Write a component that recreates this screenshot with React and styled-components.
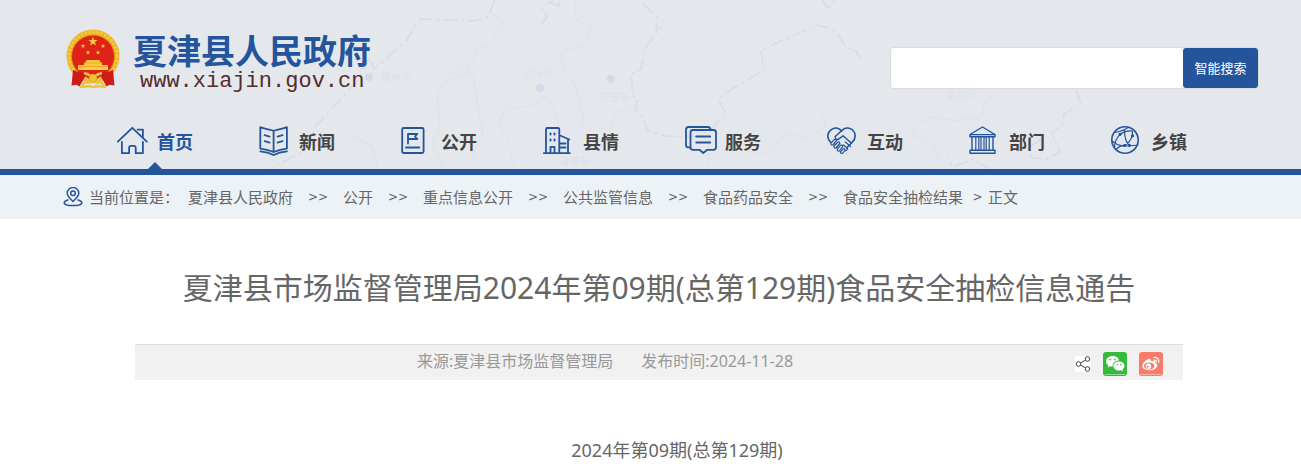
import React from 'react';
import styled, { createGlobalStyle } from 'styled-components';

const GlobalStyle = createGlobalStyle`
    * {
        box-sizing: border-box;
    }
    body {
        margin: 0;
        background-color: #fff;
        color: #666;
        font-family: 'Noto Sans', 'Noto Sans CJK SC', sans-serif;
    }
    a {
        color: inherit;
        text-decoration: none;
    }
`;

const Page = styled.div`
    padding-left: 17px;
`;

const Container = styled.div`
    max-width: 1200px;
    margin: 0 auto;
`;

const Header = styled.header`
    position: relative;
    margin-left: -17px;
    padding-left: 17px;
    background-color: #e4e8ed;
    border-bottom: 6px solid #24549b;
    overflow: hidden;
`;

const Backdrop = styled.svg`
    position: absolute;
    top: 0;
    left: 50%;
    margin-left: -650px;
    width: 1301px;
    height: 169px;
`;

const HeaderInner = styled(Container)`
    position: relative;
`;

const TopRow = styled.div`
    display: flex;
    justify-content: space-between;
    align-items: flex-start;
    height: 113px;
    padding: 29px 0 0 7px;
`;

const Brand = styled.a`
    display: flex;
    gap: 13px;
`;

const BrandText = styled.div`
    padding-top: 2px;
`;

const SiteName = styled.div`
    font-size: 34px;
    line-height: 40px;
    font-weight: 700;
    color: #24549b;
`;

const SiteUrl = styled.div`
    padding-left: 7px;
    font-family: 'Liberation Mono', monospace;
    font-size: 22px;
    line-height: 22px;
    color: #552c2c;
`;

const SearchForm = styled.form`
    display: flex;
    margin-top: 18px;
    border: 1px solid #dcdcdc;
    border-radius: 3px;
    background-color: #fff;
`;

const SearchInput = styled.input`
    width: 292px;
    height: 40px;
    padding: 0 10px;
    border: 0;
    outline: none;
    background: transparent;
    font-size: 14px;
`;

const SearchButton = styled.button`
    width: 75px;
    height: 40px;
    padding: 0 0 2px;
    border: 0;
    border-radius: 3px;
    background-color: #24549b;
    color: #fff;
    font-family: inherit;
    font-size: 13px;
    cursor: pointer;
`;

const Nav = styled.nav`
    display: flex;
    padding: 0 39px 0 25px;
`;

const NavLink = styled.a`
    position: relative;
    display: flex;
    flex: 1;
    justify-content: center;
    align-items: center;
    gap: 8px;
    height: 56px;
    font-size: 18px;
    font-weight: 700;
    color: ${({ $active }) => $active ? '#24549b' : '#444'};

    &::after {
        content: '';
        display: ${({ $active }) => $active ? 'block' : 'none'};
        position: absolute;
        bottom: 0;
        left: 50%;
        margin-left: -7px;
        border: 7px solid transparent;
        border-top: 0;
        border-bottom-color: #24549b;
    }
`;

const NavIcon = styled.svg`
    width: 32px;
    height: 30px;
    fill: none;
    stroke: #24549b;
    stroke-width: 1.8;
    stroke-linejoin: round;
    stroke-linecap: round;
`;

const CrumbBar = styled.div`
    margin-left: -17px;
    padding-left: 17px;
    background-color: #edf2f7;
`;

const Crumbs = styled(Container)`
    display: flex;
    align-items: center;
    height: 44px;
    padding: 0 0 1px 4px;
    font-size: 15px;
    white-space: nowrap;
`;

const PinIcon = styled.svg`
    width: 20px;
    height: 20px;
    margin-right: 6px;
    fill: none;
    stroke: #24549b;
    stroke-width: 1.5;
`;

const CrumbLabel = styled.span`
    margin-right: 9px;
`;

const Separator = styled.span`
    width: ${({ $last }) => $last ? '25px' : '50px'};
    padding-left: ${({ $last }) => $last ? '4px' : '0'};
    font-family: 'DejaVu Sans', sans-serif;
    font-size: 12px;
    text-align: center;
`;

const Article = styled(Container)`
    padding: 49px 76px 0;
`;

const Title = styled.h1`
    margin: 0;
    font-size: 30px;
    line-height: 40px;
    font-weight: 400;
    text-align: center;
`;

const Meta = styled.div`
    display: flex;
    height: 36px;
    margin-top: 36px;
    padding-right: 20px;
    background-color: #f1f1f1;
    border-top: 1px solid #ddd;
    color: #999;
`;

const MetaText = styled.div`
    display: flex;
    flex: 1;
    justify-content: center;
    gap: 28px;
    font-size: 16px;
    line-height: 32px;
`;

const Share = styled.div`
    display: flex;
    align-items: center;
    gap: 12px;
    padding-top: 3px;
`;

const ShareIcon = styled.svg`
    width: 16px;
    height: 16px;
    background-color: #fff;
    fill: none;
    stroke: #444;
    stroke-width: 1;
`;

const ShareButton = styled.button`
    width: 24px;
    height: 24px;
    padding: 0;
    border: 0;
    border-radius: 3px;
    background-color: ${({ $color }) => $color};
    cursor: pointer;

    svg {
        display: block;
    }
`;

const Content = styled.p`
    margin: 56px 0 0;
    font-size: 18px;
    line-height: 28px;
    text-align: center;
    text-indent: 2em;
`;

const navItems = [
    {
        name: '首页',
        icon: <>
            <path d="M.8 15.6 15.3 1.8l14.5 13.8" />
            <path d="M4.9 16v11.2h7.2v-5.4q0-2 2-2h2.6q2 0 2 2v5.4h7.2V16" />
            <path d="M20.5 3.6h5.4v7" />
        </>
    },
    {
        name: '新闻',
        icon: <>
            <path d="M14.6 4.8C10.5 3.6 6.5 3.2 1.3 1.2v21.4c5 .6 9.3 1.8 13.3 3.4 4-1.6 8.3-2.8 13.3-3.4V1.2c-5.2 2-9.2 2.4-13.3 3.6zV26" />
            <path d="M5.6 9.2l5 1.4M5.6 15.2l5 1.4M23.6 9.2l-5 1.4M23.6 15.2l-5 1.4M1.2 25.3q8 .8 13.4 3.7 5.4-2.9 13.4-3.7" />
        </>
    },
    {
        name: '公开',
        icon: <>
            <rect x="1.2" y="2" width="21.4" height="25" rx="1.5" />
            <path d="M7 17.5V8h9.3L14 10.5l2.3 2.5H7M5 21.5h13.3" />
        </>
    },
    {
        name: '县情',
        icon: <>
            <path d="M.8 27.2h26M3 27V3.2Q3 2 4.2 2H15q1.3 0 1.3 1.3V27M7.5 27v-6.2h4V27M16.5 9.2l9.8 4.3M25 13.5V27M17 17.5h5.5M17 21.5h5.5" />
            <path d="M7.5 7.5v1M11.5 7.5v1M7.5 13.5v1M11.5 13.5v1" strokeWidth="2" />
        </>
    },
    {
        name: '服务',
        icon: <>
            <path d="M5 21.4H3.5Q1 21.4 1 19V3.6Q1 1 3.5 1h19.3q2.2 0 2.8 2.4" />
            <path d="M8 4h20.5Q31 4 31 6.5v14.8q0 2.5-2.5 2.5h-6.3L18.3 27l-3.9-3.2H8q-2.5 0-2.5-2.5V6.5Q5.5 4 8 4zM11.2 10.5h14M11.2 16.5h14" />
        </>
    },
    {
        name: '互动',
        icon: <>
            <path d="M3.8 16.5C.8 13.5 0 9.500 2 6 4.500 1.800 9.300.9 12.500 3.200l2 1.600 2-1.600C19.700.9 25 1.800 27.200 6c1.800 3.700 1 7.200-2 10.300L20 21.500" strokeWidth="1.600" />
            <path d="M14.500 4.800 8.300 10.500c-.8 2.500 1.500 3.700 3.500 2.500l4.200-3.200 8.300 7.200" strokeWidth="1.500" />
            <path d="m4 17 3.300-3.300q2-1 2.200 1L5.800 19q-2.500.2-1.800-2zM7 20l4-4q2-.5 1.800 1.500L9 22q-2.500.3-2-2zM10.300 23l3.500-3.800q2-.5 1.800 1.500L12.300 25q-2.500.3-2-2zM13.300 26l3-3.300q2-.3 1.700 1.600L15.500 27.300q-2 .5-2.200-1.300M18 24.500q2 .6 2.200-1.700M16.500 19l4.200 3.800M18.300 16l5.200 4.500" strokeWidth="1.200" />
        </>
    },
    {
        name: '部门',
        icon: <>
            <path d="M1 8.5 13.5 1 26 8.5v2.3H1zM1 8.6h25M1 27.2v-3h25v3zM3 11v13M24 11v13" strokeWidth="1.4" />
            <path d="M6.8 11v13M9.8 11v13M12 11v13M15 11v13M17.2 11v13M20.2 11v13" strokeWidth="1.2" />
        </>
    },
    {
        name: '乡镇',
        icon: <>
            <circle cx="14" cy="14" r="13.2" strokeWidth="1.6" />
            <path d="M3.5 6.500Q12 5 17 1.400M9 8.300Q3 15 3.500 21.500M9 8.300Q15 4 21.500 5M1 15q6 5 12.500 5T27 19M18.500 19.500q-5-4-5-15.500M14.500 19Q22 14 21.500 5M5 23.300q4-4 8.700-4" strokeWidth="1.200" />
            <path d="M9 8.300h.1M21.500 9.800h.1M13.500 19.500h.1M18.300 19.300h.1" strokeWidth="3.200" />
        </>
    }
];

const crumbs = ['夏津县人民政府', '公开', '重点信息公开', '公共监管信息', '食品药品安全', '食品安全抽检结果'];

const star = 'M0-1 .23-.31H.95L.36.12.59.81 0 .38-.59.81-.36.12-.95-.31H-.23z';

const Emblem = () => (
    <svg width="54" height="59" viewBox="0 0 54 59" aria-hidden="true">
        <circle cx="27" cy="27" r="26.5" fill="#efb526" />
        <circle cx="27" cy="27" r="24" fill="none" stroke="#f5cb45" strokeWidth="3" strokeDasharray="2 2" />
        <circle cx="27" cy="27.500" r="21.500" fill="#df2319" stroke="#d99a1c" strokeWidth=".8" />
        <path d={star} transform="translate(27 12.500) scale(5)" fill="#f8cf3a" />
        <path d={star} transform="translate(17 17) scale(2.500)" fill="#f8cf3a" />
        <path d={star} transform="translate(37 17) scale(2.500)" fill="#f8cf3a" />
        <path d={star} transform="translate(22 23.500) scale(2.500)" fill="#f8cf3a" />
        <path d={star} transform="translate(32 23.500) scale(2.500)" fill="#f8cf3a" />
        <path d="M18 34q2-.5 2.500-3h13q.5 2.500 2.500 3v2h6v5H12v-5h6z" fill="#f6cb42" />
        <path d="M19 34h16M12 37.500h30" stroke="#e9a02a" strokeWidth=".8" />
        <path d="M7 41q6 3 13 2.500l7 2 7-2q7 .5 13-2.500l1.500 15.500-5-.8-3 1.800-4.500-8H18l-4.500 8-3-1.800-5 .8z" fill="#cd1c18" />
        <path d="M18 44q5 1 9 5 4-4 9-5M15 58l4-5q4 2 8-1 4 3 8 1l4 5-8-1-4 1.500-4-1.500zM19 48q4 5 8 5t8-5" fill="none" stroke="#f1c33a" strokeWidth="2.500" strokeLinejoin="round" />
        <circle cx="27" cy="49" r="4" fill="#f1c33a" stroke="#d9822a" strokeWidth=".6" />
    </svg>
);

// faint province map behind the header
const MapBackdrop = () => (
    <Backdrop viewBox="0 0 1301 169" fill="none" aria-hidden="true">
        <g stroke="#d7dce6" strokeWidth="1.500" strokeDasharray="14 4 3 4" strokeLinejoin="round">
            <path d="M494 0l-8 18-13 3-53-2-5 6-10 16-32 28-4-10-8 6M369 58l-14 24-16 18-24 26-10 23-35 20" />
            <path d="M642 4l14 13-1 13 5-3-15 20-5 22-10 5 2 22 5 3-3 10 9 10 3 11 18 6 32 1 15-8 14-16-8-14 12-9 34-20-3-20 20-9 36-16 16 4 14 19 8 1 5 9" />
            <path d="M1075 90l5 14-17 10-1 10-11 9 8 19-13 7-15-1-5-10 14-8-9-11M988 169l-16-10-20 8-6-10" />
            <path d="M540 25l6-8-5-10 11-6M550 3l8 3 1-7M822 0l4 8 5-2 3-6" />
        </g>
        <g stroke="#dee2e8" strokeWidth="1" strokeLinejoin="round">
            <path d="M488 10l13 12-12 22-13 4-11 27-20 6-9 15 3 30-7 18 10 24" />
            <path d="M448 74l14-8 10 10 6 35 4 22-11 24 9 10M340 154l14-17 17 9 5 21" />
            <path d="M574 0l1 20 15 6-4 17-27 10 5 22 10 9 9 37-6 12M497 122l8-14 25-2 16-10 12 28-5 20M497 122l8 14 8 30M640 101l-26 13-8 23-8 12" />
            <path d="M708 129v40M740 150l27 4 17-20 24 4 17-12-4-12M995 90l-12 17-3 13-14-3-9 4-26-4-17 10-2 9 22 10 4 16" />
        </g>
        <g fill="#d5dae8">
            <circle cx="368" cy="77" r="4" />
            <circle cx="539" cy="88" r="4" />
            <circle cx="610" cy="79" r="4" />
        </g>
        <g fill="#dde1e8" fontSize="10">
            <text x="380" y="81">德州市</text>
            <text x="522" y="78">滨州市</text>
            <text x="598" y="101">东营市</text>
            <text x="558" y="165">淄博市</text>
            <text x="945" y="98">烟台市</text>
        </g>
    </Backdrop>
);

const App = () => {
    return (
        <>
            <GlobalStyle />
            <Page>
                <Header>
                    <MapBackdrop />
                    <HeaderInner>
                        <TopRow>
                            <Brand href="#">
                                <Emblem />
                                <BrandText>
                                    <SiteName>夏津县人民政府</SiteName>
                                    <SiteUrl>www.xiajin.gov.cn</SiteUrl>
                                </BrandText>
                            </Brand>
                            <SearchForm onSubmit={(e) => e.preventDefault()}>
                                <SearchInput type="text" aria-label="智能搜索" />
                                <SearchButton type="submit">智能搜索</SearchButton>
                            </SearchForm>
                        </TopRow>
                        <Nav>
                            {navItems.map(({ name, icon }, i) => (
                                <NavLink href="#" key={name} $active={i === 0}>
                                    <NavIcon viewBox="0 0 32 30" aria-hidden="true">{icon}</NavIcon>
                                    {name}
                                </NavLink>
                            ))}
                        </Nav>
                    </HeaderInner>
                </Header>
                <CrumbBar>
                    <Crumbs>
                        <PinIcon viewBox="0 0 20 20" aria-hidden="true">
                            <path d="M10 14.5C6.5 11 4.2 9 4.2 6.2a5.8 5.6 0 0 1 11.6 0C15.8 9 13.5 11 10 14.5z" />
                            <circle cx="10" cy="6.3" r="2.3" />
                            <path d="M5.5 12.8C-1 14.5-.5 18.6 10 18.6s11-4.1 4.5-5.8" />
                        </PinIcon>
                        <CrumbLabel>当前位置是：</CrumbLabel>
                        {crumbs.map((name, i) => (
                            <React.Fragment key={name}>
                                <a href="#">{name}</a>
                                {i < crumbs.length - 1
                                    ? <Separator>&gt;&gt;</Separator>
                                    : <Separator $last>&gt;</Separator>}
                            </React.Fragment>
                        ))}
                        <span>正文</span>
                    </Crumbs>
                </CrumbBar>
                <Article as="main">
                    <Title>夏津县市场监督管理局2024年第09期(总第129期)食品安全抽检信息通告</Title>
                    <Meta>
                        <MetaText>
                            <span>来源:夏津县市场监督管理局</span>
                            <span>发布时间:2024-11-28</span>
                        </MetaText>
                        <Share>
                            <ShareIcon viewBox="0 0 16 16" aria-hidden="true">
                                <circle cx="3.5" cy="8" r="2.3" />
                                <circle cx="12.5" cy="3" r="2.3" />
                                <circle cx="12.5" cy="13" r="2.3" />
                                <path d="M5.5 6.9l5-2.8M5.5 9.1l5 2.8" />
                            </ShareIcon>
                            <ShareButton type="button" aria-label="微信" $color="#35bb3b">
                                <svg width="24" height="24" viewBox="0 0 24 24" fill="#fff">
                                    <path d="M9.6 4C5.9 4 3 6.3 3 9.3c0 1.7.9 3.1 2.4 4.1l-.7 2.1 2.5-1.3c.8.2 1.6.3 2.5.3-.5-3.6 2.6-6 6.5-5.9C15.6 6 12.9 4 9.6 4z" />
                                    <path d="M16 9.5c-3.3 0-5.6 2-5.6 4.5s2.5 4.6 5.6 4.6c.7 0 1.3-.1 1.9-.3l2 1.1-.5-1.8c1.2-.8 2.1-2.1 2.1-3.6 0-2.5-2.5-4.5-5.5-4.5z" />
                                    <g fill="#35bb3b">
                                        <circle cx="7.3" cy="7.6" r=".9" />
                                        <circle cx="11.8" cy="7.6" r=".9" />
                                        <circle cx="14.2" cy="12.7" r=".8" />
                                        <circle cx="17.9" cy="12.7" r=".8" />
                                    </g>
                                    <path d="M2 22h20v.8H2z" fill="#a6e1a7" />
                                </svg>
                            </ShareButton>
                            <ShareButton type="button" aria-label="微博" $color="#f77c6c">
                                <svg width="24" height="24" viewBox="0 0 24 24" fill="#fff">
                                    <path d="M9.8 7.1c-3 .7-6.5 4.3-6.5 6.9 0 2.5 3.3 4.2 7 4.2 4.8 0 8-2.5 8-4.8 0-1.5-1.1-2.2-2.3-2.6.5-1.8-.7-2.7-4-1.4.5-1.5-.4-2.6-2.2-2.3z" />
                                    <ellipse cx="10.2" cy="14" rx="5.3" ry="3.5" fill="#f77c6c" />
                                    <circle cx="9.5" cy="14.2" r="2.7" />
                                    <circle cx="8.7" cy="14.7" r="1" fill="#f77c6c" />
                                    <path d="M14.5 5.6c3.3-.8 6 1.7 5.1 5.2M15 8.1c1.6-.3 2.6.7 2.2 2.2" fill="none" stroke="#fff" strokeWidth="1.3" />
                                    <path d="M2 22h20v.8H2z" fill="#fbc2ba" />
                                </svg>
                            </ShareButton>
                        </Share>
                    </Meta>
                    <Content>2024年第09期(总第129期)</Content>
                </Article>
            </Page>
        </>
    );
};

export default App;
